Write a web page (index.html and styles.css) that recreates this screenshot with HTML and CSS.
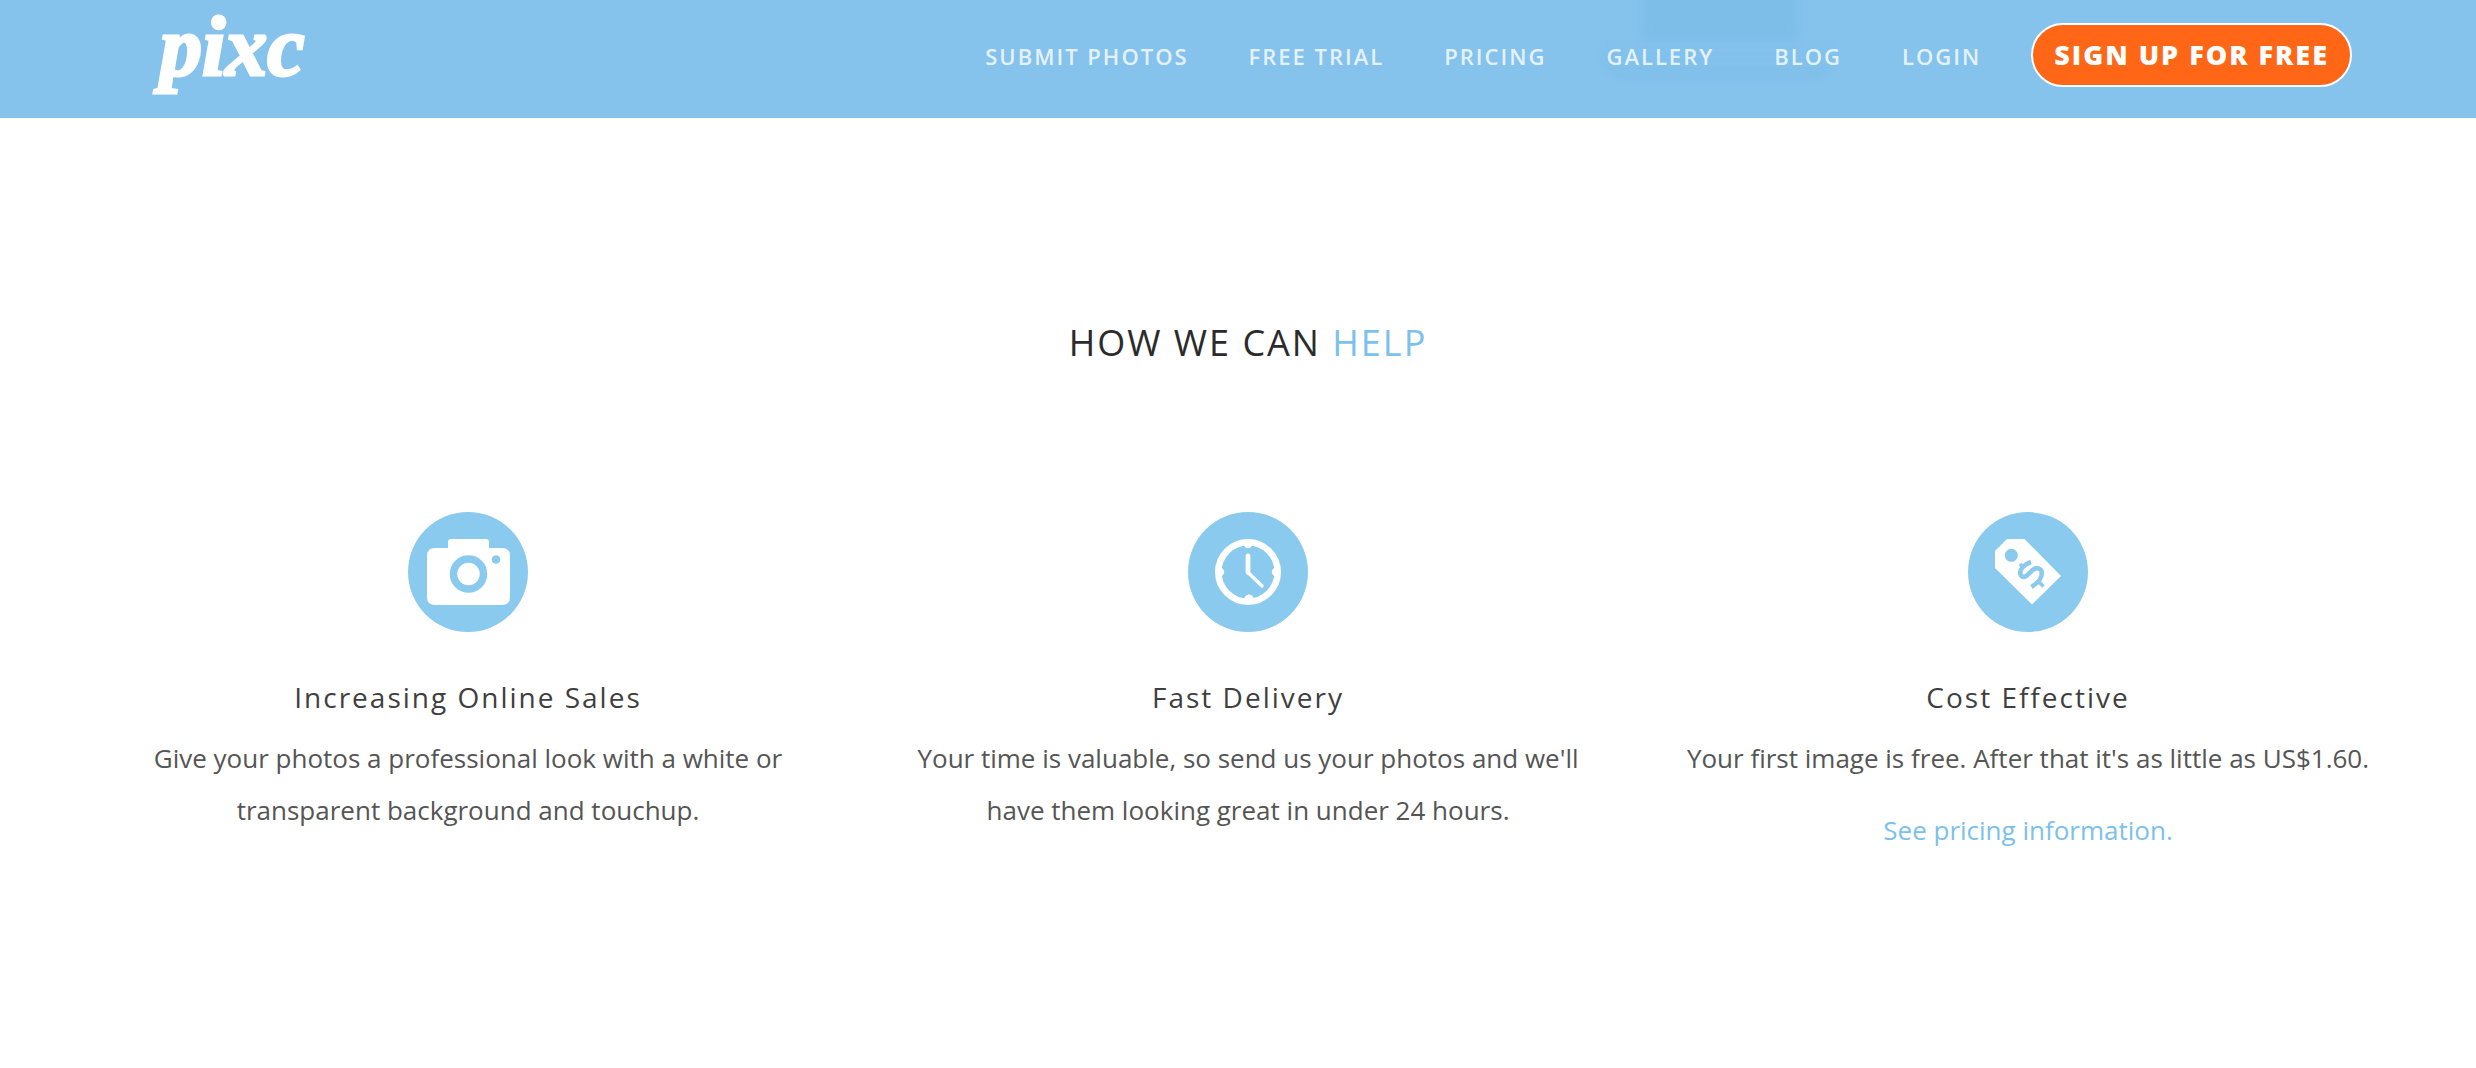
FILE: index.html
```
<!DOCTYPE html>
<html lang="en">
<head>
    <meta charset="UTF-8">
    <meta name="viewport" content="width=device-width, initial-scale=1.0">
    <title>Pixc</title>
    <link rel="stylesheet" href="styles.css">
</head>
<body>

    <header class="header">
        <a href="#" class="logo">pixc</a>
        <nav class="nav">
            <a href="#">SUBMIT PHOTOS</a>
            <a href="#">FREE TRIAL</a>
            <a href="#">PRICING</a>
            <a href="#" class="nav-gallery">GALLERY</a>
            <a href="#">BLOG</a>
            <a href="#">LOGIN</a>
            <button type="button" class="signup">SIGN UP FOR FREE</button>
        </nav>
    </header>

    <main class="help">
        <h2>HOW WE CAN <span>HELP</span></h2>

        <div class="features">
            <section class="feature">
                <svg class="feature-icon" viewBox="0 0 120 120" aria-hidden="true">
                    <circle cx="60" cy="60" r="60" fill="#8acaef"/>
                    <path d="M27 36h13v-6q0-3 3-3h35q3 0 3 3v6h13q8 0 8 8v41q0 8-8 8H27q-8 0-8-8V44q0-8 8-8z" fill="#fff"/>
                    <circle cx="60.5" cy="62" r="15" fill="none" stroke="#8acaef" stroke-width="7.5"/>
                    <circle cx="88" cy="47.5" r="4.3" fill="#8acaef"/>
                </svg>
                <h3>Increasing Online Sales</h3>
                <p>Give your photos a professional look with a white or transparent background and touchup.</p>
            </section>

            <section class="feature">
                <svg class="feature-icon" viewBox="0 0 120 120" aria-hidden="true">
                    <circle cx="60" cy="60" r="60" fill="#8acaef"/>
                    <circle cx="60" cy="60" r="29.7" fill="none" stroke="#fff" stroke-width="6.6"/>
                    <g fill="#fff">
                        <circle cx="60" cy="32" r="4.2"/>
                        <circle cx="88" cy="60" r="4.2"/>
                        <circle cx="61" cy="87" r="4.6"/>
                        <circle cx="32" cy="60" r="4.2"/>
                    </g>
                    <path d="M60 44v16.5" fill="none" stroke="#fff" stroke-width="4.8" stroke-linecap="round"/>
                    <path d="M60 60.5l14 13.5" fill="none" stroke="#fff" stroke-width="3.4" stroke-linecap="round"/>
                </svg>
                <h3>Fast Delivery</h3>
                <p>Your time is valuable, so send us your photos and we'll have them looking great in under 24 hours.</p>
            </section>

            <section class="feature">
                <svg class="feature-icon" viewBox="0 0 120 120" aria-hidden="true">
                    <circle cx="60" cy="60" r="60" fill="#8acaef"/>
                    <path d="M39 27h17.5L93 64 64 92.5 27 56V39z" fill="#fff"/>
                    <circle cx="43.3" cy="43.3" r="6.5" fill="#8acaef"/>
                    <g fill="none" stroke="#8acaef" stroke-width="4.6">
                        <path d="M63 50C57 52 51 57 52.500 62.500C55 67.500 59 64 62.500 60C66 56 71 54.500 73.500 59C75 65 70 71 63.500 75"/>
                        <path d="M52 52l4 4M71.5 70.5l4 4" stroke-width="3.5"/>
                    </g>
                </svg>
                <h3>Cost Effective</h3>
                <p>Your first image is free. After that it's as little as US$1.60.</p>
                <p><a href="#">See pricing information.</a></p>
            </section>
        </div>
    </main>

</body>
</html>
```
FILE: styles.css
```
* {
    box-sizing: border-box;
}

body {
    margin: 0;
    background: #fff;
    color: #555;
    font-family: 'Open Sans', sans-serif;
    font-size: 26px;
    line-height: 52px;
}

a {
    color: #7cc1ec;
    text-decoration: none;
}

.header {
    position: relative;
    z-index: 0;
    display: flex;
    justify-content: space-between;
    align-items: flex-start;
    height: 118px;
    padding: 0 124px 0 160px;
    overflow: hidden;
    background: #85c3ed;
}

.logo {
    color: #fff;
    font-family: 'Liberation Serif', serif;
    font-size: 84px;
    font-weight: bold;
    font-style: italic;
    line-height: 94px;
    -webkit-text-stroke: 3px #fff;
}

.nav {
    display: flex;
    align-items: center;
    gap: 60px;
    padding-top: 22px;
}

.nav a {
    position: relative;
    padding-top: 2px;
    color: rgba(255, 255, 255, 0.8);
    font-size: 22px;
    font-weight: 600;
    letter-spacing: 2px;
    line-height: 64px;
}

.nav-gallery::before,
.nav-gallery::after {
    content: "";
    position: absolute;
    z-index: -1;
}

.nav-gallery::before {
    top: -32px;
    left: 36px;
    width: 156px;
    height: 50px;
    background: rgba(112, 182, 228, 0.4);
    filter: blur(4px);
}

.nav-gallery::after {
    top: 18px;
    left: -6px;
    width: 236px;
    height: 40px;
    border-radius: 0 0 24px 24px;
    background: linear-gradient(rgba(112, 182, 228, 0), rgba(112, 182, 228, 0.25));
    filter: blur(2px);
}

.signup {
    height: 64px;
    margin-left: -10px;
    padding: 0 21px 2px;
    border: 2px solid #fff;
    border-radius: 32px;
    background: #ff6615;
    color: #fff;
    font-family: inherit;
    font-size: 27px;
    font-weight: 800;
    letter-spacing: 2px;
    cursor: pointer;
}

.help {
    padding: 198px 58px 0 78px;
    text-align: center;
}

.help h2 {
    margin: 0 0 142px;
    color: #2b2b2b;
    font-size: 36px;
    font-weight: 400;
    letter-spacing: 2px;
    line-height: 54px;
}

.help h2 span {
    color: #7cc1ec;
}

.features {
    display: grid;
    grid-template-columns: repeat(3, 1fr);
}

.feature {
    padding: 0 46px;
}

.feature-icon {
    display: block;
    width: 120px;
    height: 120px;
    margin: 0 auto 40px;
}

.feature h3 {
    margin: 0 0 10px;
    color: #3f3f3f;
    font-size: 28px;
    font-weight: 400;
    letter-spacing: 2px;
    line-height: 50px;
}

.feature p {
    margin: 0 0 20px;
}
```
